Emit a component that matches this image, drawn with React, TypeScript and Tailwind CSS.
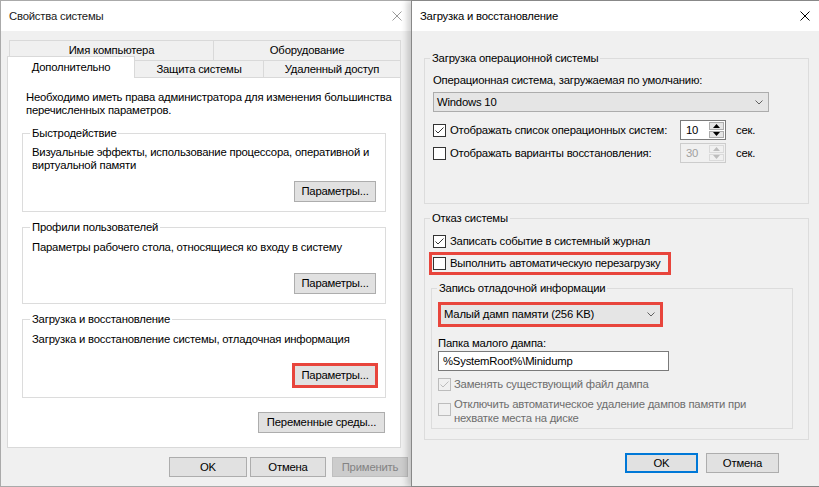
import React from 'react'

const F = "font-['Liberation_Sans',Arial,sans-serif] text-[11.3px] tracking-[-0.2px] leading-[13px] text-black whitespace-nowrap"

function CloseX({ color }: { color: string }) {
  return (
    <svg width="10" height="10" viewBox="0 0 10 10">
      <path d="M0.5 0.5 L9.5 9.5 M9.5 0.5 L0.5 9.5" stroke={color} strokeWidth="1" />
    </svg>
  )
}

function Btn({ className = '', children }: { className?: string; children: React.ReactNode }) {
  return (
    <div className={`flex items-center justify-center bg-[#e1e1e1] border border-[#adadad] ${className}`}>
      {children}
    </div>
  )
}

function Check({ checked = false, disabled = false }: { checked?: boolean; disabled?: boolean }) {
  return (
    <div
      className={`w-[13px] h-[13px] shrink-0 border flex items-center justify-center ${
        disabled ? 'border-[#bcbcbc] bg-[#f0f0f0]' : 'border-[#333333] bg-white'
      }`}
    >
      {checked && (
        <svg width="11" height="11" viewBox="0 0 11 11">
          <path d="M1.5 5.5 L4 8 L9.5 2.5" fill="none" stroke={disabled ? '#bcbcbc' : '#333333'} strokeWidth="1" />
        </svg>
      )}
    </div>
  )
}

function Group({ title, className = '', legend = 'ml-[-2px]', children }: { title: string; className?: string; legend?: string; children: React.ReactNode }) {
  return (
    <fieldset className={`border border-[#dcdcdc] ${className}`}>
      <legend className={`px-[2px] ${legend}`}>{title}</legend>
      {children}
    </fieldset>
  )
}

function Combo({ text, className = '' }: { text: string; className?: string }) {
  return (
    <div className={`flex items-center justify-between bg-[#e5e5e5] pl-[3px] pr-[5px] ${className}`}>
      <span>{text}</span>
      <svg width="8" height="5" viewBox="0 0 8 5">
        <path d="M0.5 0.5 L4 4 L7.5 0.5" fill="none" stroke="#606060" strokeWidth="1" />
      </svg>
    </div>
  )
}

function Spin({ value, disabled = false }: { value: string; disabled?: boolean }) {
  const arrow = disabled ? '#bdbdbd' : '#000000'
  return (
    <div
      className={`w-[46px] h-[20px] flex border ${
        disabled ? 'border-[#cccccc] bg-[#f0f0f0] text-[#a0a0a0]' : 'border-[#7a7a7a] bg-white'
      }`}
    >
      <div className="flex-1 pl-[5px] flex items-center">{value}</div>
      <div className="w-[17px] flex flex-col gap-[1px] p-[1px]">
        <div
          className={`flex-1 flex items-center justify-center border ${
            disabled ? 'border-[#dadada] bg-[#f0f0f0]' : 'border-[#acacac] bg-[#e5e5e5]'
          }`}
        >
          <svg width="7" height="4" viewBox="0 0 7 4">
            <path d="M0 4 L3.5 0 L7 4 Z" fill={arrow} />
          </svg>
        </div>
        <div
          className={`flex-1 flex items-center justify-center border ${
            disabled ? 'border-[#dadada] bg-[#f0f0f0]' : 'border-[#acacac] bg-[#e5e5e5]'
          }`}
        >
          <svg width="7" height="4" viewBox="0 0 7 4">
            <path d="M0 0 L3.5 4 L7 0 Z" fill={arrow} />
          </svg>
        </div>
      </div>
    </div>
  )
}

function SystemProps() {
  return (
    <div className="w-[411px] h-[487px] shrink-0 flex flex-col border-l border-t border-b border-[#aaaaaa] bg-[#f0f0f0]">
      <div className="h-[30px] bg-white flex items-center justify-between pl-[8px] pr-[9px]">
        <span className="text-[#1a1a1a]">Свойства системы</span>
        <CloseX color="#9a9a9a" />
      </div>

      <div className="pl-[6px] pt-[9px] flex flex-col">
        {/* tabs */}
        <div className="flex ml-[2px] h-[20px]">
          <div className="w-[204px] border-l border-t border-[#d9d9d9] flex items-center justify-center">Имя компьютера</div>
          <div className="w-[188px] border-l border-t border-r border-[#d9d9d9] flex items-center justify-center">Оборудование</div>
        </div>
        <div className="relative flex items-end h-[21px] mt-[-4px]">
          <div className="relative z-10 w-[128px] h-[22px] -mb-px bg-white border-l border-t border-r border-[#d9d9d9] flex items-center justify-center">
            Дополнительно
          </div>
          <div className="w-[129px] h-[17px] bg-[#f0f0f0] border-t border-r border-[#d9d9d9] flex items-center justify-center">Защита системы</div>
          <div className="w-[137px] h-[17px] bg-[#f0f0f0] border-t border-r border-[#d9d9d9] flex items-center justify-center">Удаленный доступ</div>
        </div>

        {/* panel */}
        <div className="w-[394px] h-[371px] bg-white border border-[#d9d9d9] pl-[14px] pt-[13px] flex flex-col">
          <p className="pl-[4px]">
            Необходимо иметь права администратора для изменения большинства
            <br />
            перечисленных параметров.
          </p>

          <Group title="Быстродействие" className="w-[364px] mt-[10px] px-[9px] pb-[9px]">
            <p className="mt-[6px]">
              Визуальные эффекты, использование процессора, оперативной и
              <br />
              виртуальной памяти
            </p>
            <div className="flex justify-end mt-[9px]">
              <Btn className="w-[82px] h-[21px]">Параметры...</Btn>
            </div>
          </Group>

          <Group title="Профили пользователей" className="w-[364px] mt-[9px] px-[9px] pb-[9px]">
            <p className="mt-[7px]">Параметры рабочего стола, относящиеся ко входу в систему</p>
            <div className="flex justify-end mt-[19px]">
              <Btn className="w-[82px] h-[21px]">Параметры...</Btn>
            </div>
          </Group>

          <Group title="Загрузка и восстановление" className="w-[364px] mt-[9px] px-[9px] pb-[11px]">
            <p className="mt-[7px]">Загрузка и восстановление системы, отладочная информация</p>
            <div className="flex justify-end mt-[19px]">
              <Btn className="w-[82px] h-[21px] outline-3 outline-[#e8453c] -outline-offset-1">Параметры...</Btn>
            </div>
          </Group>

          <div className="w-[364px] flex justify-end mt-[14px] pr-[1px]">
            <Btn className="w-[127px] h-[21px]">Переменные среды...</Btn>
          </div>
        </div>

        {/* dialog buttons */}
        <div className="flex mt-[9px] pl-[162px]">
          <Btn className="w-[78px] h-[20px]">OK</Btn>
          <Btn className="w-[76px] h-[20px] ml-[3px]">Отмена</Btn>
          <div className="w-[76px] h-[20px] ml-[6px] flex items-center justify-center bg-[#cccccc] border border-[#bfbfbf] text-[#838383]">
            Применить
          </div>
        </div>
      </div>
    </div>
  )
}

function BootRecovery() {
  return (
    <div className="relative z-10 w-[408px] h-[487px] shrink-0 flex flex-col border-l border-t border-b border-[#888888] bg-[#f0f0f0] shadow-[-4px_0_6px_rgba(0,0,0,0.18)]">
      <div className="h-[30px] bg-white flex items-center justify-between pl-[8px] pr-[9px]">
        <span>Загрузка и восстановление</span>
        <CloseX color="#000000" />
      </div>

      <div className="pl-[12px] pt-[21px] flex flex-col">
        <Group title="Загрузка операционной системы" className="w-[385px] pl-[8px] pb-[40px]" legend="ml-[-3px]">
          <div className="mt-[9px]">Операционная система, загружаемая по умолчанию:</div>
          <Combo text="Windows 10" className="mt-[5px] w-[336px] h-[20px] border border-[#acacac]" />
          <div className="mt-[8px] flex items-center h-[20px]">
            <div className="w-[247px] flex items-center gap-[4px]">
              <Check checked />
              <span>Отображать список операционных систем:</span>
            </div>
            <Spin value="10" />
            <span className="ml-[10px]">сек.</span>
          </div>
          <div className="mt-[3px] flex items-center h-[20px]">
            <div className="w-[247px] flex items-center gap-[4px]">
              <Check />
              <span>Отображать варианты восстановления:</span>
            </div>
            <Spin value="30" disabled />
            <span className="ml-[10px]">сек.</span>
          </div>
        </Group>

        <Group title="Отказ системы" className="w-[385px] mt-[8px] pl-[8px] pb-[10px]" legend="ml-[-3px]">
          <div className="mt-[8px] h-[16px] flex items-center gap-[4px]">
            <Check checked />
            <span>Записать событие в системный журнал</span>
          </div>
          <div className="mt-[3px] ml-[-4px] w-[242px] h-[23px] border-[3px] border-[#e8453c] pl-[1px] flex items-center gap-[4px]">
            <Check />
            <span>Выполнить автоматическую перезагрузку</span>
          </div>

          <Group title="Запись отладочной информации" className="w-[362px] mt-[7px] ml-[-2px] pl-[6px] pb-[3px]" legend="ml-[-1px]">
            <div className="mt-[7px] w-[225px] h-[25px] border-[3px] border-[#e8453c]">
              <Combo text="Малый дамп памяти (256 KB)" className="w-full h-full" />
            </div>
            <div className="mt-[10px]">Папка малого дампа:</div>
            <div className="mt-[1px] w-[231px] h-[20px] bg-white border border-[#7a7a7a] pl-[4px] flex items-center">
              %SystemRoot%\Minidump
            </div>
            <div className="mt-[5px] h-[16px] flex items-center gap-[3px] text-[#6d6d6d]">
              <Check checked disabled />
              <span>Заменять существующий файл дампа</span>
            </div>
            <div className="mt-[5px] flex items-start gap-[3px] text-[#6d6d6d]">
              <div className="mt-[6px]">
                <Check disabled />
              </div>
              <p className="leading-[14px]">
                Отключить автоматическое удаление дампов памяти при
                <br />
                нехватке места на диске
              </p>
            </div>
          </Group>
        </Group>

        <div className="flex mt-[13px] pl-[201px]">
          <div className="w-[73px] h-[20px] flex items-center justify-center bg-[#e1e1e1] border-2 border-[#0078d7]">OK</div>
          <Btn className="w-[73px] h-[20px] ml-[8px]">Отмена</Btn>
        </div>
      </div>
    </div>
  )
}

export default function App() {
  return (
    <div className={`flex w-[819px] h-[487px] overflow-hidden bg-[#f0f0f0] ${F}`}>
      <SystemProps />
      <BootRecovery />
    </div>
  )
}
